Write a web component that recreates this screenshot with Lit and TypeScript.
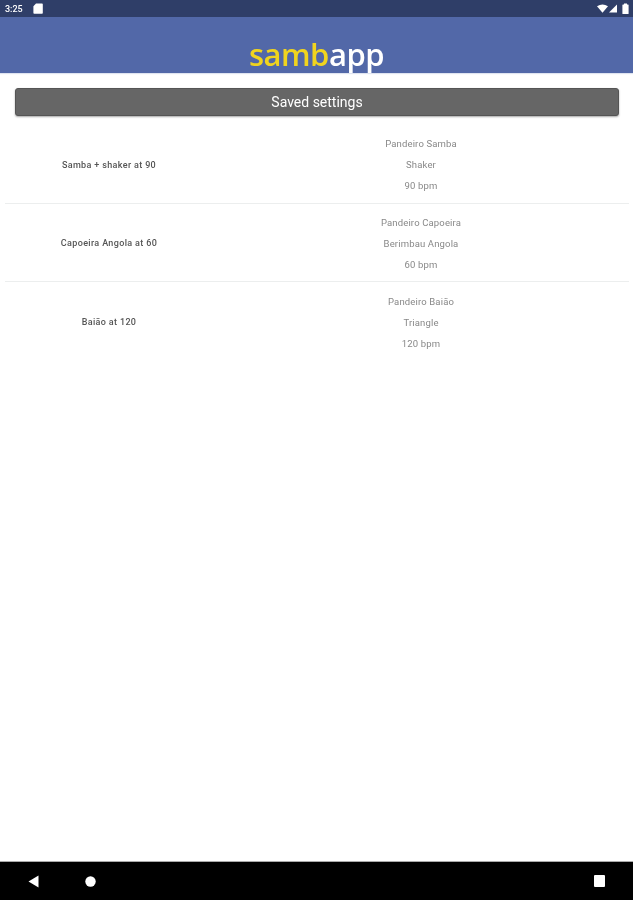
import { LitElement, html, css } from "lit";
import { customElement } from "lit/decorators.js";

const rows = [
  { name: "Samba + shaker at 90", lines: ["Pandeiro Samba", "Shaker", "90 bpm"] },
  { name: "Capoeira Angola at 60", lines: ["Pandeiro Capoeira", "Berimbau Angola", "60 bpm"] },
  { name: "Baião at 120", lines: ["Pandeiro Baião", "Triangle", "120 bpm"] },
];

@customElement("app-root")
export class AppRoot extends LitElement {
  static styles = css`
    :host {
      display: flex;
      flex-direction: column;
      height: 900px;
      font-family: Roboto, "Liberation Sans", sans-serif;
      background: #fff;
    }
    .status {
      height: 17px;
      background: #2f3e68;
      color: #fff;
      display: flex;
      align-items: center;
      justify-content: space-between;
      padding: 0 4px 0 5px;
      font-size: 9px;
      font-weight: 500;
    }
    .status > * { filter: blur(0.4px); }
    .status-left, .status-right { display: flex; align-items: center; }
    .status-left { gap: 10px; }
    .status-right { gap: 1px; }
    .battery { margin-left: 4px; }
    .bar {
      height: 56px;
      background: #5268a8;
      box-sizing: border-box;
      display: flex;
      justify-content: center;
      align-items: flex-end;
      box-shadow: 0 1px 1px #dfe4f0;
    }
    .logo {
      font-family: "Open Sans", sans-serif;
      font-weight: 600;
      font-size: 31px;
      line-height: 40px;
      letter-spacing: -0.5px;
      color: #fff;
      margin-bottom: -1px;
      filter: blur(0.5px);
    }
    .logo span { color: #f0d41e; }
    .content { flex: 1; padding-top: 15px; }
    .saved {
      margin: 0 14px 0 15px;
      height: 28px;
      box-sizing: border-box;
      background: #666;
      border: 1px solid #555;
      border-radius: 3px;
      box-shadow: 0 1px 2px rgba(0, 0, 0, 0.35);
      color: #fff;
      font-size: 14px;
      display: flex;
      align-items: center;
      justify-content: center;
    }
    .saved span { filter: blur(0.35px); }
    .list { margin-top: 9px; padding: 0 4px 0 5px; }
    .row {
      display: grid;
      grid-template-columns: 1fr 2fr;
      align-items: center;
      box-sizing: border-box;
      height: 78.5px;
      padding-top: 2px;
      border-bottom: 1px solid #eceeee;
      text-align: center;
    }
    .row:last-child { border-bottom: none; }
    .name {
      font-size: 9px;
      font-weight: 500;
      color: #555;
      letter-spacing: 0.35px;
      filter: blur(0.45px);
    }
    .lines {
      display: flex;
      flex-direction: column;
      gap: 10px;
      font-size: 9.5px;
      line-height: 11px;
      color: #888;
      letter-spacing: 0.15px;
      filter: blur(0.5px);
    }
    .nav {
      height: 39px;
      background: #000;
      border-top: 1px solid #aaa;
      box-sizing: border-box;
      display: flex;
      align-items: center;
      padding: 0 28px;
      justify-content: space-between;
    }
    .nav-left { display: flex; align-items: center; gap: 46px; }
    svg { display: block; }
  `;

  render() {
    return html`
      <div class="status">
        <div class="status-left">
          <span>3:25</span>
          <svg width="10" height="11" viewBox="0 0 10 11"><path d="M3 .5h6a.8.8 0 0 1 .8.8v8.6a.8.8 0 0 1-.8.8H1.2a.8.8 0 0 1-.8-.8V3.2z" fill="#fff"/></svg>
        </div>
        <div class="status-right">
          <svg width="11" height="9" viewBox="0 0 12 9"><path d="M0 2 Q6 -2 12 2 L6 9z" fill="#fff"/></svg>
          <svg width="8" height="9" viewBox="0 0 9 9"><path d="M0 9 L9 0 V9z" fill="#fff"/></svg>
          <svg class="battery" width="7" height="11" viewBox="0 0 7 11"><path d="M2 1.5V.5h3v1h1a.6.6 0 0 1 .6.6v8.3a.6.6 0 0 1-.6.6H1a.6.6 0 0 1-.6-.6V2.1A.6.6 0 0 1 1 1.5z" fill="#fff"/></svg>
        </div>
      </div>
      <div class="bar"><div class="logo"><span>samb</span>app</div></div>
      <div class="content">
        <div class="saved"><span>Saved settings</span></div>
        <div class="list">
          ${rows.map(
            (r) => html`
              <div class="row">
                <div class="name">${r.name}</div>
                <div class="lines">${r.lines.map((l) => html`<span>${l}</span>`)}</div>
              </div>
            `
          )}
        </div>
      </div>
      <div class="nav">
        <div class="nav-left">
          <svg width="11" height="13" viewBox="0 0 11 13"><path d="M10.5 .5V12.5L.5 6.5z" fill="#fff"/></svg>
          <svg width="11" height="11" viewBox="0 0 11 11"><circle cx="5.5" cy="5.5" r="5.2" fill="#fff"/></svg>
        </div>
        <svg width="11" height="12" viewBox="0 0 11 12"><rect x="0" y="0" width="11" height="12" rx="1" fill="#fff"/></svg>
      </div>
    `;
  }
}
